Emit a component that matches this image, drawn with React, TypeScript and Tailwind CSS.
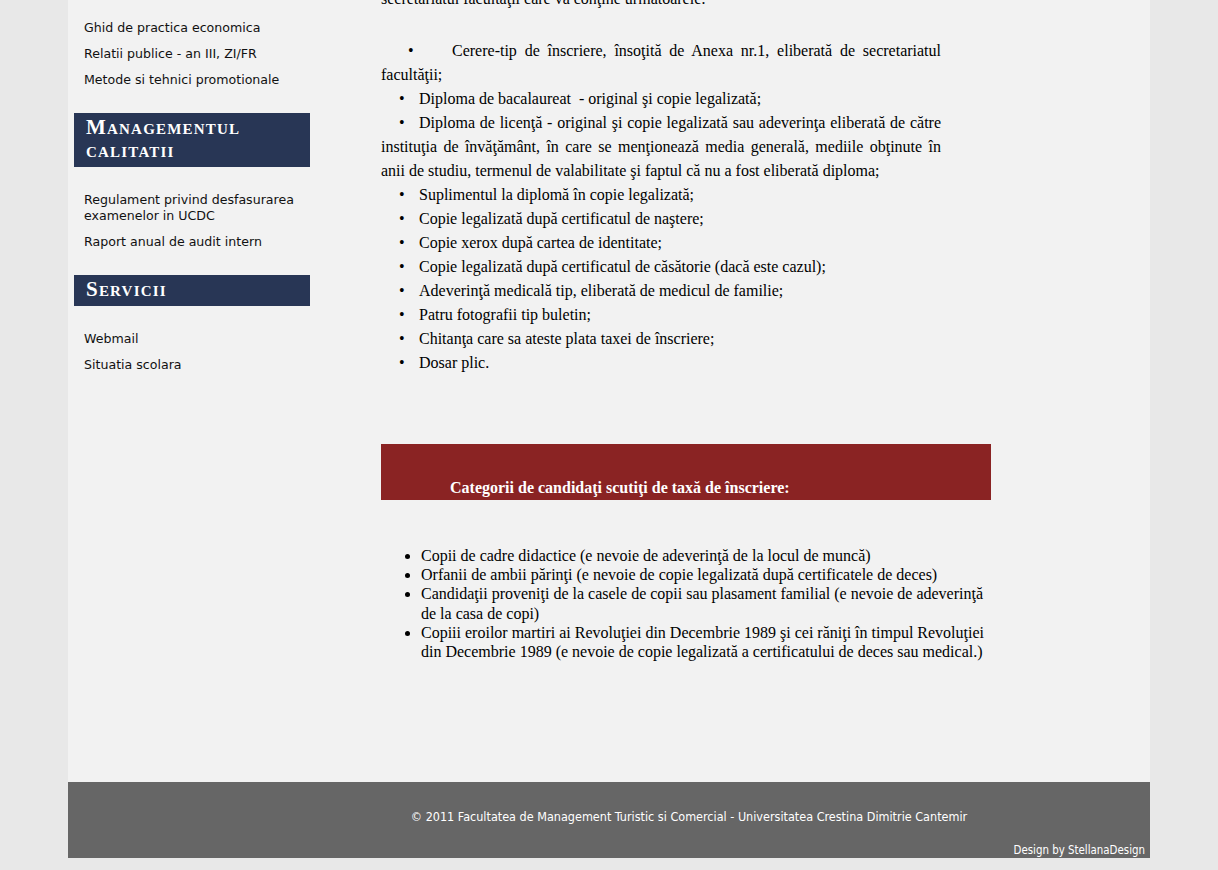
import React from "react";

const sans = { fontFamily: '"DejaVu Sans", Verdana, sans-serif' };

function SideLink({ children }: { children: React.ReactNode }) {
  return <li className="text-[12.6px] leading-[16px] text-[#111]">{children}</li>;
}

function SideHeading({ first, rest }: { first: string; rest: string }) {
  return (
    <div className="mx-[6px] w-[236px] bg-[#283655] pl-[12px] pr-[20px] pt-[3px] pb-[5px] text-white font-['Liberation_Serif',serif] font-bold text-[21px] tracking-[1.2px] leading-[23px] [font-variant:small-caps]">
      {first}
      {rest}
    </div>
  );
}

function Bul({ children, first }: { children: React.ReactNode; first?: boolean }) {
  return (
    <p className={first ? "indent-[27px]" : "indent-[18px]"}>
      <span className={first ? "inline-block w-[44px] indent-0" : "inline-block w-[20px] indent-0"}>•</span>
      {children}
    </p>
  );
}

export default function App() {
  return (
    <div className="min-h-screen bg-[#e8e8e8]">
      <div className="mx-auto w-[1082px] bg-[#f2f2f2]">
        <div className="flex h-[782px] overflow-hidden">
          <aside className="w-[313px] shrink-0 pt-[20px]" style={sans}>
            <ul className="flex flex-col gap-[10px] pl-[16px]">
              <SideLink>Ghid de practica economica</SideLink>
              <SideLink>Relatii publice - an III, ZI/FR</SideLink>
              <SideLink>Metode si tehnici promotionale</SideLink>
            </ul>
            <div className="mt-[25px]">
              <SideHeading first="M" rest="anagementul calitatii" />
            </div>
            <ul className="mt-[25px] flex flex-col gap-[10px] pl-[16px] pr-[60px]">
              <SideLink>Regulament privind desfasurarea examenelor in UCDC</SideLink>
              <SideLink>Raport anual de audit intern</SideLink>
            </ul>
            <div className="mt-[25px]">
              <SideHeading first="S" rest="ervicii" />
            </div>
            <ul className="mt-[25px] flex flex-col gap-[10px] pl-[16px]">
              <SideLink>Webmail</SideLink>
              <SideLink>Situatia scolara</SideLink>
            </ul>
          </aside>
          <main className="w-[610px] shrink-0 -mt-[13px] font-['Liberation_Serif',serif] text-[16px] text-black">
            <div className="w-[560px] text-justify leading-[24px]">
              <p>secretariatul facultăţii care va conţine următoarele:</p>
              <div className="mt-[28px]">
                <Bul first>
                  Cerere-tip de înscriere, însoţită de Anexa nr.1, eliberată de secretariatul facultăţii;
                </Bul>
                <Bul>Diploma de bacalaureat&nbsp; - original şi copie legalizată;</Bul>
                <Bul>
                  Diploma de licenţă - original şi copie legalizată sau adeverinţa eliberată de către instituţia de
                  învăţământ, în care se menţionează media generală, mediile obţinute în anii de studiu, termenul de
                  valabilitate şi faptul că nu a fost eliberată diploma;
                </Bul>
                <Bul>Suplimentul la diplomă în copie legalizată;</Bul>
                <Bul>Copie legalizată după certificatul de naştere;</Bul>
                <Bul>Copie xerox după cartea de identitate;</Bul>
                <Bul>Copie legalizată după certificatul de căsătorie (dacă este cazul);</Bul>
                <Bul>Adeverinţă medicală tip, eliberată de medicul de familie;</Bul>
                <Bul>Patru fotografii tip buletin;</Bul>
                <Bul>Chitanţa care sa ateste plata taxei de înscriere;</Bul>
                <Bul>Dosar plic.</Bul>
              </div>
            </div>
            <div className="mt-[69px] h-[56px] bg-[#8a2323] pl-[69px] pt-[32px] text-[16px] font-bold leading-[24px] text-white">
              Categorii de candidaţi scutiţi de taxă de înscriere:
            </div>
            <ul className="mt-[46px] list-disc pl-[40px] leading-[19.2px]">
              <li>Copii de cadre didactice (e nevoie de adeverinţă de la locul de muncă)</li>
              <li>Orfanii de ambii părinţi (e nevoie de copie legalizată după certificatele de deces)</li>
              <li>
                Candidaţii proveniţi de la casele de copii sau plasament familial (e nevoie de adeverinţă de la casa de
                copi)
              </li>
              <li>
                Copiii eroilor martiri ai Revoluţiei din Decembrie 1989 şi cei răniţi în timpul Revoluţiei din Decembrie
                1989 (e nevoie de copie legalizată a certificatului de deces sau medical.)
              </li>
            </ul>
          </main>
        </div>
        <footer className="h-[76px] bg-[#666666] text-white font-['DejaVu_Sans_Condensed','Liberation_Sans',sans-serif] text-[12.5px] flex flex-col">
          <div className="ml-[313px] w-[616px] pt-[27px] text-center leading-[16px]">
            © 2011 Facultatea de Management Turistic si Comercial - Universitatea Crestina Dimitrie Cantemir
          </div>
          <div className="mt-auto pb-[1px] pr-[5px] text-right text-[11.4px] leading-[14px]">Design by StellanaDesign</div>
        </footer>
      </div>
    </div>
  );
}
